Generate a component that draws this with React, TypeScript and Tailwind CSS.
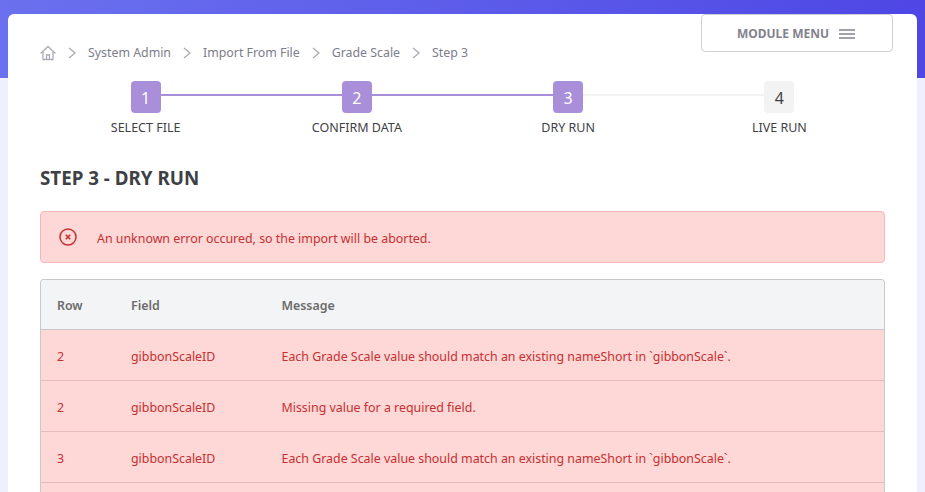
const crumbs = ["System Admin", "Import From File", "Grade Scale", "Step 3"];

const steps = [
  { n: 1, label: "SELECT FILE", active: true },
  { n: 2, label: "CONFIRM DATA", active: true },
  { n: 3, label: "DRY RUN", active: true },
  { n: 4, label: "LIVE RUN", active: false },
];

const matchMsg = "Each Grade Scale value should match an existing nameShort in `gibbonScale`.";

const rows = [
  { row: 2, field: "gibbonScaleID", message: matchMsg },
  { row: 2, field: "gibbonScaleID", message: "Missing value for a required field." },
  { row: 3, field: "gibbonScaleID", message: matchMsg },
];

function HomeIcon() {
  return (
    <svg viewBox="0 0 16 16" fill="none" stroke="#a9abb8" strokeWidth="1.3" className="h-4 w-4">
      <path d="M1 8 L8 1.5 L15 8" strokeLinejoin="round" strokeLinecap="round" />
      <path d="M3 6.5 V14.5 H13 V6.5" strokeLinejoin="round" />
      <path d="M6.5 14.5 V10 H9.5 V14.5" />
    </svg>
  );
}

function Chevron() {
  return (
    <svg viewBox="0 0 8 12" fill="none" stroke="#a9abb8" strokeWidth="1.3" className="mx-3 h-3 w-2">
      <path d="M1 1 L7 6 L1 11" />
    </svg>
  );
}

export default function App() {
  return (
    <div className="h-[492px] w-[925px] overflow-hidden bg-[#f0f0fc] font-['Noto_Sans','Open_Sans',sans-serif]">
      {/* Header */}
      <div className="h-[78px] bg-gradient-to-r from-[#6b70ee] to-[#4f46e5]" />

      {/* Card */}
      <div className="relative mx-2 -mt-[64px] w-[909px] rounded-t-md bg-white px-8 pt-[30px]">
        <button className="absolute right-6 top-0 flex h-[38px] w-[192px] items-center justify-center gap-[10px] rounded border border-[#cfcfd4] bg-white pr-[2px] pt-[1px] text-xs font-bold text-[#82828e]">
          MODULE MENU
          <svg viewBox="0 0 16 10" fill="none" stroke="#82828e" strokeWidth="1.4" className="h-[10px] w-4">
            <path d="M0 1 H16 M0 5 H16 M0 9 H16" />
          </svg>
        </button>

        {/* Breadcrumbs */}
        <nav className="flex h-[18px] items-center text-[12.35px] text-[#7d7d8c]">
          <HomeIcon />
          {crumbs.map((c) => (
            <span key={c} className="flex items-center">
              <Chevron />
              {c}
            </span>
          ))}
        </nav>

        {/* Steps */}
        <div className="mt-[19px] grid grid-cols-4">
          {steps.map((s, i) => (
            <div key={s.n} className="relative flex flex-col items-center">
              {i < steps.length - 1 && (
                <div
                  className={`absolute left-1/2 top-[13px] h-[2px] w-full ${
                    steps[i + 1].active ? "bg-[#a98eda]" : "bg-[#f3f3f3]"
                  }`}
                />
              )}
              <div
                className={`relative flex h-8 w-[30px] items-center justify-center rounded-sm pt-[2px] text-base ${
                  s.active ? "bg-[#a98eda] text-white" : "bg-[#f3f3f3] text-[#3f3f46]"
                }`}
              >
                {s.n}
              </div>
              <div className="mt-[7px] text-[12.5px] leading-4 text-[#3f3f46]">{s.label}</div>
            </div>
          ))}
        </div>

        <h2 className="mt-[28px] text-[18.8px] font-bold leading-7 text-[#3f3f46]">STEP 3 - DRY RUN</h2>

        {/* Alert */}
        <div className="mt-[19px] flex h-[52px] items-center rounded border border-[#fbb6b6] bg-[#fed7d7] pl-[18px] text-[12.4px] text-[#c53030]">
          <svg viewBox="0 0 18 18" fill="none" stroke="#c53030" className="h-[18px] w-[18px]">
            <circle cx="9" cy="9" r="8" strokeWidth="1.5" />
            <path d="M6.8 6.8 L11.2 11.2 M11.2 6.8 L6.8 11.2" strokeWidth="1.6" />
          </svg>
          <span className="ml-[20px] pt-1">An unknown error occured, so the import will be aborted.</span>
        </div>

        {/* Table */}
        <div className="mt-4 overflow-hidden rounded-t border border-b-0 border-[#c9c9c9] text-[12.4px]">
          <div className="flex h-[50px] items-center border-b border-[#c9c9c9] bg-[#f3f4f6] pt-1 font-semibold text-[#6b6b6b]">
            <div className="w-[90px] pl-4">Row</div>
            <div className="w-[150.5px]">Field</div>
            <div>Message</div>
          </div>
          {rows.map((r, i) => (
            <div key={i} className="flex h-[51px] items-center border-b border-[#e5bcbc] bg-[#fed7d7] pt-1 text-[#c53030]">
              <div className="w-[90px] pl-4">{r.row}</div>
              <div className="w-[150.5px]">{r.field}</div>
              <div>{r.message}</div>
            </div>
          ))}
          <div className="h-[51px] bg-[#fed7d7]" />
        </div>
      </div>
    </div>
  );
}
